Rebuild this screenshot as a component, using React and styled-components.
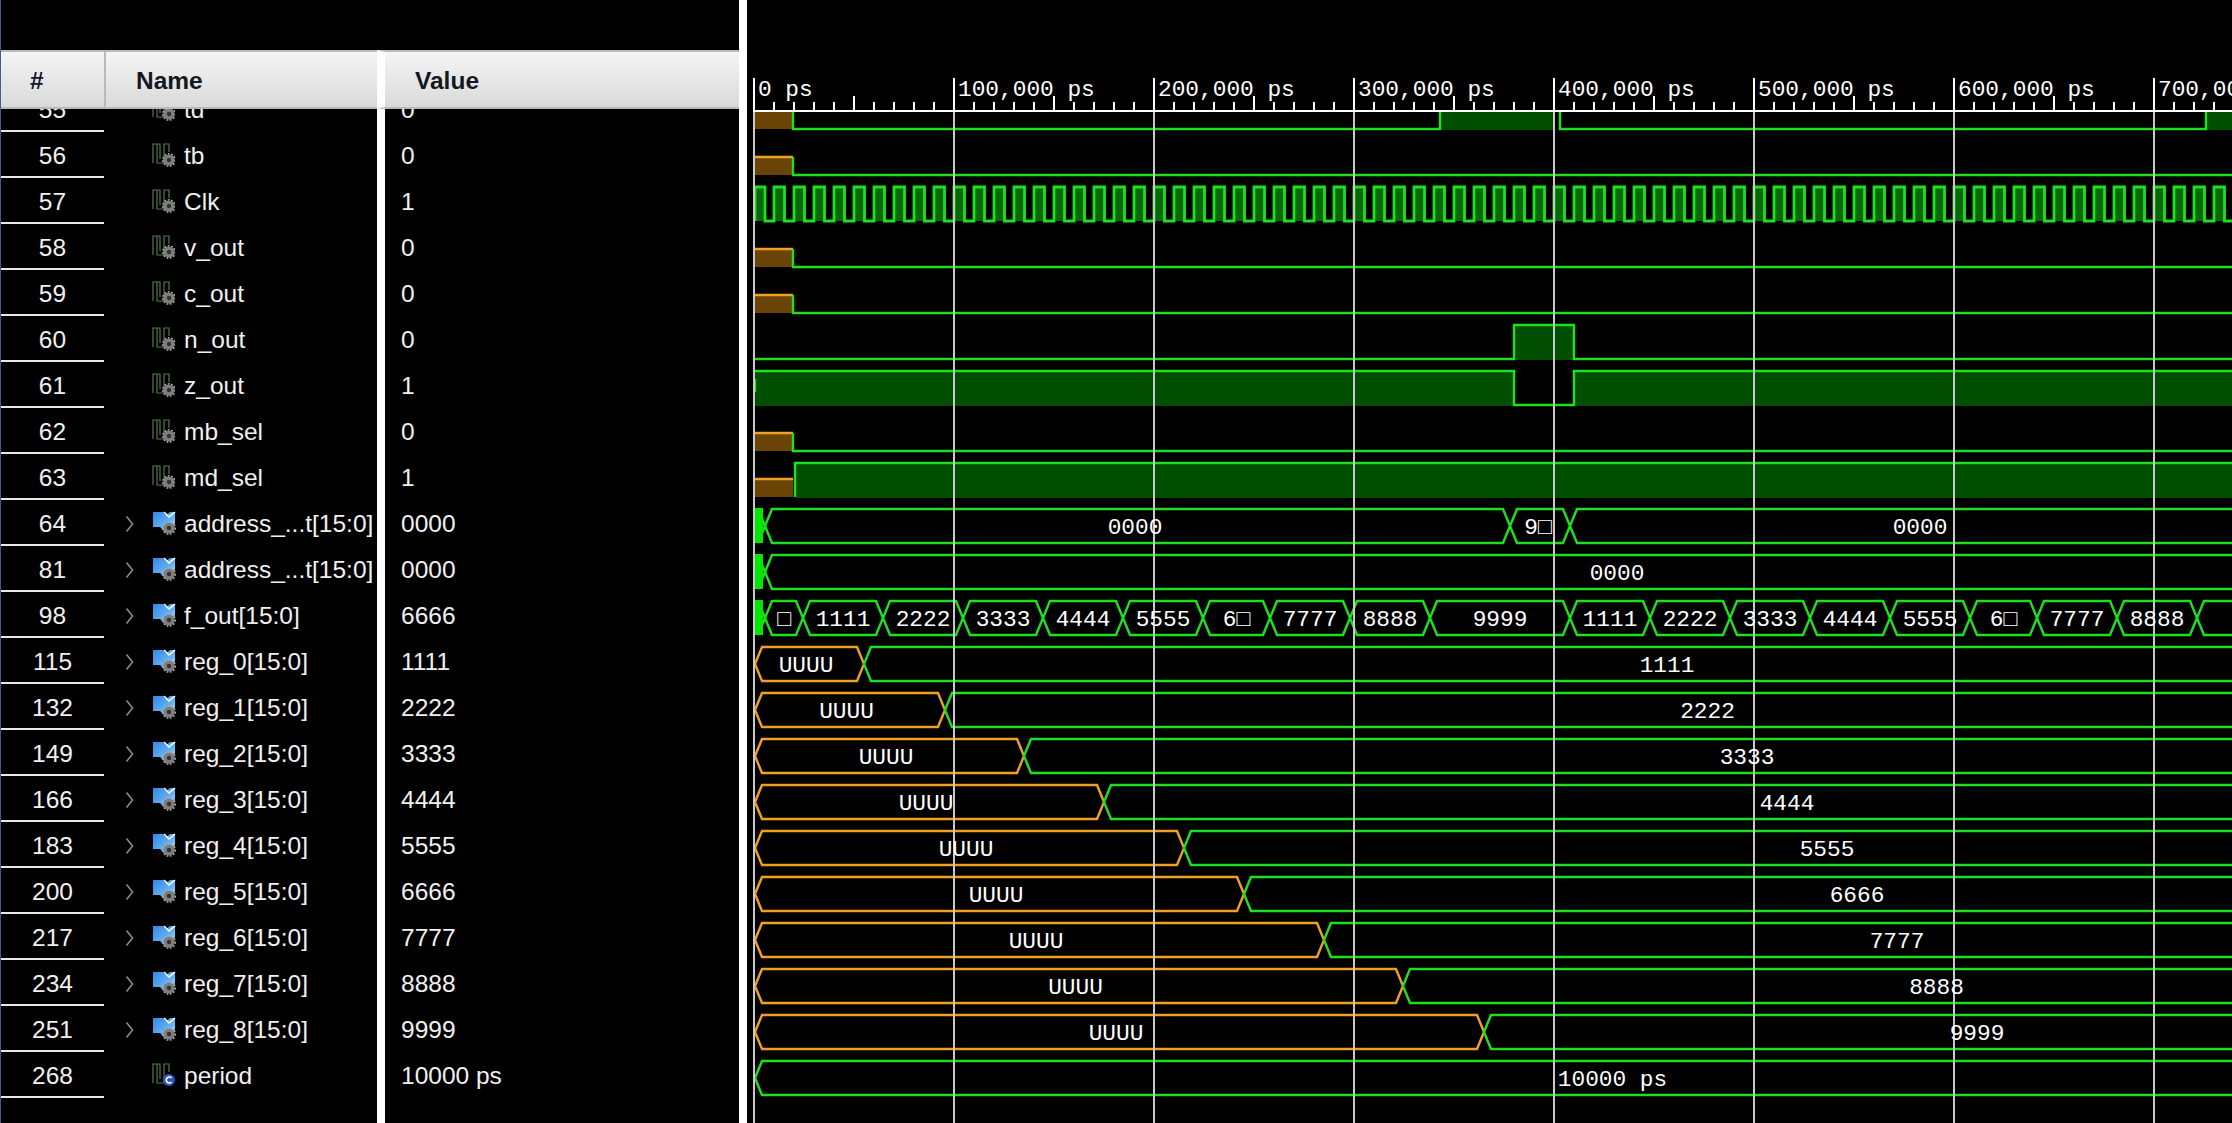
import React from "react";
import styled, { createGlobalStyle } from "styled-components";

const Global = createGlobalStyle`
  html, body { margin: 0; padding: 0; background: #000; }
  #root { height: 100vh; }
`;

const Page = styled.div`
  display: flex;
  height: 1123px;
  background: #000;
  overflow: hidden;
  font-family: "Liberation Sans", Arial, sans-serif;
`;

const SignalPane = styled.section`
  box-sizing: border-box;
  flex: 0 0 747px;
  display: flex;
  flex-direction: column;
  padding-top: 50px;
  border-left: 1px solid #3f5f8f;
  border-right: 8px solid #fff;
  overflow: hidden;
`;

const Header = styled.header`
  position: relative;
  z-index: 1;
  flex: 0 0 59px;
  display: grid;
  grid-template-columns: 103px 273px 1fr;
`;

const HeaderCell = styled.div`
  box-sizing: border-box;
  display: flex;
  align-items: center;
  padding: 3px 0 0 ${(p) => p.$pad}px;
  background: linear-gradient(#f5f5f5, #d9d9d9);
  border-top: 2px solid #b9b9b9;
  border-bottom: 2px solid #b9b9b9;
  border-left: ${(p) => p.$edge || "none"};
  font-size: 24.5px;
  font-weight: 700;
  color: #16181f;
`;

const Rows = styled.div`
  flex: 1;
  overflow: hidden;
`;

const RowList = styled.ul`
  list-style: none;
  margin: -23px 0 0;
  padding: 0;
`;

const Row = styled.li`
  display: grid;
  grid-template-columns: 103px 273px 1fr;
  height: ${(p) => p.$height || 46}px;
  color: #f0f0f0;
  font-size: 24.5px;
`;

const NumCell = styled.div`
  box-sizing: border-box;
  display: flex;
  align-items: center;
  justify-content: center;
  padding-top: 3px;
  border-bottom: 2px solid #e8e8e8;
`;

const BlankCell = styled.div``;

const NameCell = styled.div`
  display: flex;
  align-items: center;
  padding: 1px 0 0 21px;
  white-space: nowrap;
`;

const ChevronSlot = styled.span`
  flex: 0 0 27px;
  display: flex;
  align-items: center;
`;

const IconSlot = styled.span`
  flex: 0 0 32px;
  display: flex;
  align-items: center;
  margin-top: -1px;
`;

const ValueCell = styled.div`
  display: flex;
  align-items: center;
  padding: 1px 0 0 16px;
  border-left: 8px solid #fff;
`;

const WavePane = styled.section`
  flex: 1;
  min-width: 0;
  background: #000;
`;

const WaveSvg = styled.svg`
  display: block;
  width: 1485px;
  height: 1123px;
`;

const Trace = styled.path`
  fill: none;
  stroke: ${(p) => p.$color || "#1fe01f"};
  stroke-width: ${(p) => p.$width || 2.4}px;
`;

const Area = styled.path`
  fill: #066806;
  stroke: none;
`;

const Fill = styled.rect`
  fill: ${(p) => p.$color || "#004f00"};
`;

const GridLine = styled.line`
  stroke: ${(p) => p.$color || "#c9c9c9"};
  stroke-width: 2px;
`;

const MonoText = styled.text`
  font-family: "Liberation Mono", "DejaVu Sans Mono", monospace;
  font-size: 22.8px;
  fill: #fff;
  text-anchor: ${(p) => p.$anchor || "middle"};
`;

const Chevron = () => (
  <svg width="9" height="18" viewBox="0 0 9 18">
    <path d="M1.5 1.5 L7.5 9 L1.5 16.5" fill="none" stroke="#8a8a8a" strokeWidth="1.6" />
  </svg>
);

const Gear = ({ cx = 17, cy = 17 }) => (
  <g>
    <circle cx={cx} cy={cy} r="5.6" fill="#7e7e7e" />
    <circle cx={cx} cy={cy} r="6.2" fill="none" stroke="#a8a8a8" strokeWidth="1.6" strokeDasharray="1.8 1.6" />
    <circle cx={cx} cy={cy} r="2.2" fill="#333" />
  </g>
);

const Pulse = () => (
  <path d="M1 20 V1 H8 V16 M5 1 V20 H12 V1 H17 V9" fill="none" stroke="#557a4b" strokeWidth="1.2" />
);

const BitIcon = () => (
  <svg width="23" height="24" viewBox="0 0 23 24">
    <Pulse />
    <Gear />
  </svg>
);

const BusIcon = () => (
  <svg width="24" height="24" viewBox="0 0 24 24">
    <defs>
      <linearGradient id="busBlue" x1="0" y1="0" x2="1" y2="1">
        <stop offset="0" stopColor="#2f86e6" />
        <stop offset="0.6" stopColor="#66b4f5" />
        <stop offset="1" stopColor="#e6f3ff" />
      </linearGradient>
    </defs>
    <path d="M1 1 H11 L14 4 L18 1 H23 V12 L14 22 L8 16 H1 Z" fill="url(#busBlue)" />
    <path d="M12 1 L17 6 L23 1" fill="none" stroke="#fff" strokeWidth="1.6" />
    <Gear cx={17} cy={17} />
  </svg>
);

const TimeIcon = () => (
  <svg width="23" height="24" viewBox="0 0 23 24">
    <Pulse />
    <circle cx="17" cy="17" r="6" fill="#2b55c4" />
    <path d="M19.5 15 A3 3 0 1 0 19.5 19" fill="none" stroke="#fff" strokeWidth="1.7" />
  </svg>
);

const ICONS = { bit: BitIcon, bus: BusIcon, time: TimeIcon };

const SIGNALS = [
  [55, "td", "0", "bit"],
  [56, "tb", "0", "bit"],
  [57, "Clk", "1", "bit"],
  [58, "v_out", "0", "bit"],
  [59, "c_out", "0", "bit"],
  [60, "n_out", "0", "bit"],
  [61, "z_out", "1", "bit"],
  [62, "mb_sel", "0", "bit"],
  [63, "md_sel", "1", "bit"],
  [64, "address_...t[15:0]", "0000", "bus"],
  [81, "address_...t[15:0]", "0000", "bus"],
  [98, "f_out[15:0]", "6666", "bus"],
  [115, "reg_0[15:0]", "1111", "bus"],
  [132, "reg_1[15:0]", "2222", "bus"],
  [149, "reg_2[15:0]", "3333", "bus"],
  [166, "reg_3[15:0]", "4444", "bus"],
  [183, "reg_4[15:0]", "5555", "bus"],
  [200, "reg_5[15:0]", "6666", "bus"],
  [217, "reg_6[15:0]", "7777", "bus"],
  [234, "reg_7[15:0]", "8888", "bus"],
  [251, "reg_8[15:0]", "9999", "bus"],
  [268, "period", "10000 ps", "time"],
];

const GREEN = "#1fe01f";
const ORANGE = "#f0a024";
const BROWN = "#6a4306";
const BRIGHT = "#00e800";
const RIGHT = 2470;
const HALF = 7;

const hexagon = (a, b, top) => {
  const bottom = top + 34;
  const mid = top + 17;
  return `M${a} ${mid} L${a + HALF} ${top} H${b - HALF} L${b} ${mid} L${b - HALF} ${bottom} H${a + HALF} Z`;
};

const F_OUT = [
  [765, 803, "□"], [803, 883, "1111"], [883, 963, "2222"], [963, 1043, "3333"], [1043, 1123, "4444"],
  [1123, 1203, "5555"], [1203, 1270, "6□"], [1270, 1350, "7777"], [1350, 1430, "8888"], [1430, 1570, "9999"],
  [1570, 1650, "1111"], [1650, 1730, "2222"], [1730, 1810, "3333"], [1810, 1890, "4444"], [1890, 1970, "5555"],
  [1970, 2037, "6□"], [2037, 2117, "7777"], [2117, 2197, "8888"], [2197, RIGHT, ""],
];

const REGS = [
  ["1111", 864], ["2222", 945], ["3333", 1024], ["4444", 1104], ["5555", 1184],
  ["6666", 1244], ["7777", 1324], ["8888", 1403], ["9999", 1484],
];

/* one-bit signals that start unknown and settle low */
const UNKNOWN_LOW = [1, 3, 4, 7];

const clkPath = () => {
  let d = "M755 221 V187 H765";
  for (let x = 774; x < 2240; x += 20) d += ` V221 H${x} V187 H${x + 10.5}`;
  return d + " V221";
};

const BusLane = ({ top, segs, block }) => (
  <g>
    {block && <Trace d={`M758 ${top} L765 ${top + 17} L758 ${top + 34}`} />}
    {block && <Fill x="755" y={top - 1} width="8" height="35" $color={BRIGHT} />}
    {segs.map(([a, b, , color], i) => (
      <Trace key={i} d={hexagon(a, b, top)} $color={color || GREEN} />
    ))}
  </g>
);

const BusLabels = ({ top, segs }) =>
  segs
    .filter((s) => s[2])
    .map(([a, b, label, , at], i) => (
      <MonoText key={i} x={at ?? (a + b) / 2} y={top + 25}>
        {label}
      </MonoText>
    ));

const Waves = () => {
  const majors = Array.from({ length: 8 }, (_, i) => 754 + 200 * i);
  const minors = Array.from({ length: 75 }, (_, i) => 754 + 20 * i).filter((x) => (x - 754) % 100 !== 0);
  const mids = Array.from({ length: 8 }, (_, i) => 854 + 200 * i);

  const addr0 = [
    [765, 1510, "0000", GREEN, 1135],
    [1510, 1570, "9□", GREEN, 1538],
    [1570, RIGHT, "0000", GREEN, 1920],
  ];
  const addr1 = [[765, RIGHT, "0000", GREEN, 1617]];
  const regLanes = REGS.map(([label, c], i) => ({
    top: 647 + 46 * i,
    segs: [
      [755, c, "UUUU", ORANGE, (748 + c) / 2],
      [c, RIGHT, label, GREEN],
    ],
  }));
  const period = { top: 1061, segs: [[755, RIGHT, "10000 ps", GREEN]] };

  return (
    <WaveSvg viewBox="747 0 1485 1123" role="img" aria-label="Signal waveforms">
      {/* td */}
      <Fill x="755" y="112" width="38" height="17" $color={BROWN} />
      <Fill x="1440" y="112" width="114" height="18" />
      <Fill x="2206" y="112" width="26" height="18" />
      <Trace d="M793 112 V129 H1440 V112" />
      <Trace d="M1560 112 V129 H2206 V112" />

      {/* unknown, then low */}
      {UNKNOWN_LOW.map((k) => {
        const low = 129 + 46 * k;
        return (
          <g key={k}>
            <Fill x="755" y={low - 18} width="38" height="18" $color={BROWN} />
            <Trace d={`M755 ${low - 18} H793`} $color={ORANGE} />
            <Trace d={`M793 ${low - 18} V${low} H2232`} />
          </g>
        );
      })}

      {/* Clk */}
      <Area d={clkPath()} />
      <Trace d={clkPath()} $width={2.8} />

      {/* n_out */}
      <Fill x="1514" y="325" width="60" height="35" />
      <Trace d="M755 359 H1514 V325 H1574 V359 H2232" />

      {/* z_out */}
      <Fill x="755" y="371" width="759" height="35" />
      <Fill x="1574" y="371" width="658" height="35" />
      <Trace d="M755 371 H1514 V405 H1574 V371 H2232" />
      <Trace d="M755 379 V392" />

      {/* md_sel */}
      <Fill x="755" y="479" width="38" height="18" $color={BROWN} />
      <Trace d="M755 479 H793" $color={ORANGE} />
      <Fill x="796" y="463" width="1436" height="35" />
      <Trace d="M795 497 V463 H2232" />

      {/* buses */}
      <BusLane top={509} segs={addr0} block />
      <BusLane top={555} segs={addr1} block />
      <BusLane top={601} segs={F_OUT} block />
      {regLanes.map((l) => (
        <BusLane key={l.top} top={l.top} segs={l.segs} />
      ))}
      <BusLane top={period.top} segs={period.segs} />

      {/* time grid */}
      {majors.map((x) => (
        <GridLine key={x} x1={x} x2={x} y1="111" y2="1123" />
      ))}

      {/* bus values */}
      <BusLabels top={509} segs={addr0} />
      <BusLabels top={555} segs={addr1} />
      <BusLabels top={601} segs={F_OUT} />
      {regLanes.map((l) => (
        <BusLabels key={l.top} top={l.top} segs={l.segs} />
      ))}
      <BusLabels top={period.top} segs={period.segs} />

      {/* ruler */}
      <GridLine x1="753" x2="2232" y1="111" y2="111" $color="#fff" />
      {minors.map((x) => (
        <GridLine key={x} x1={x} x2={x} y1="102" y2="111" $color="#fff" />
      ))}
      {mids.map((x) => (
        <GridLine key={x} x1={x} x2={x} y1="96" y2="111" $color="#fff" />
      ))}
      {majors.map((x, i) => (
        <g key={x}>
          <GridLine x1={x} x2={x} y1="78" y2="112" $color="#fff" />
          <MonoText x={x + 4} y="96" $anchor="start">
            {i === 0 ? "0 ps" : `${i}00,000 ps`}
          </MonoText>
        </g>
      ))}
    </WaveSvg>
  );
};

export default function App() {
  return (
    <Page>
      <Global />
      <SignalPane>
        <Header>
          <HeaderCell $pad={29}>#</HeaderCell>
          <HeaderCell $pad={30} $edge="2px solid #b9b9b9">Name</HeaderCell>
          <HeaderCell $pad={30} $edge="8px solid #fff">Value</HeaderCell>
        </Header>
        <Rows>
          <RowList>
            {SIGNALS.map(([num, name, value, kind]) => {
              const Icon = ICONS[kind];
              return (
                <Row key={num}>
                  <NumCell>{num}</NumCell>
                  <NameCell>
                    <ChevronSlot>{kind === "bus" && <Chevron />}</ChevronSlot>
                    <IconSlot>
                      <Icon />
                    </IconSlot>
                    {name}
                  </NameCell>
                  <ValueCell>{value}</ValueCell>
                </Row>
              );
            })}
            <Row $height={40} aria-hidden="true">
              <BlankCell />
              <BlankCell />
              <ValueCell />
            </Row>
          </RowList>
        </Rows>
      </SignalPane>
      <WavePane>
        <Waves />
      </WavePane>
    </Page>
  );
}
